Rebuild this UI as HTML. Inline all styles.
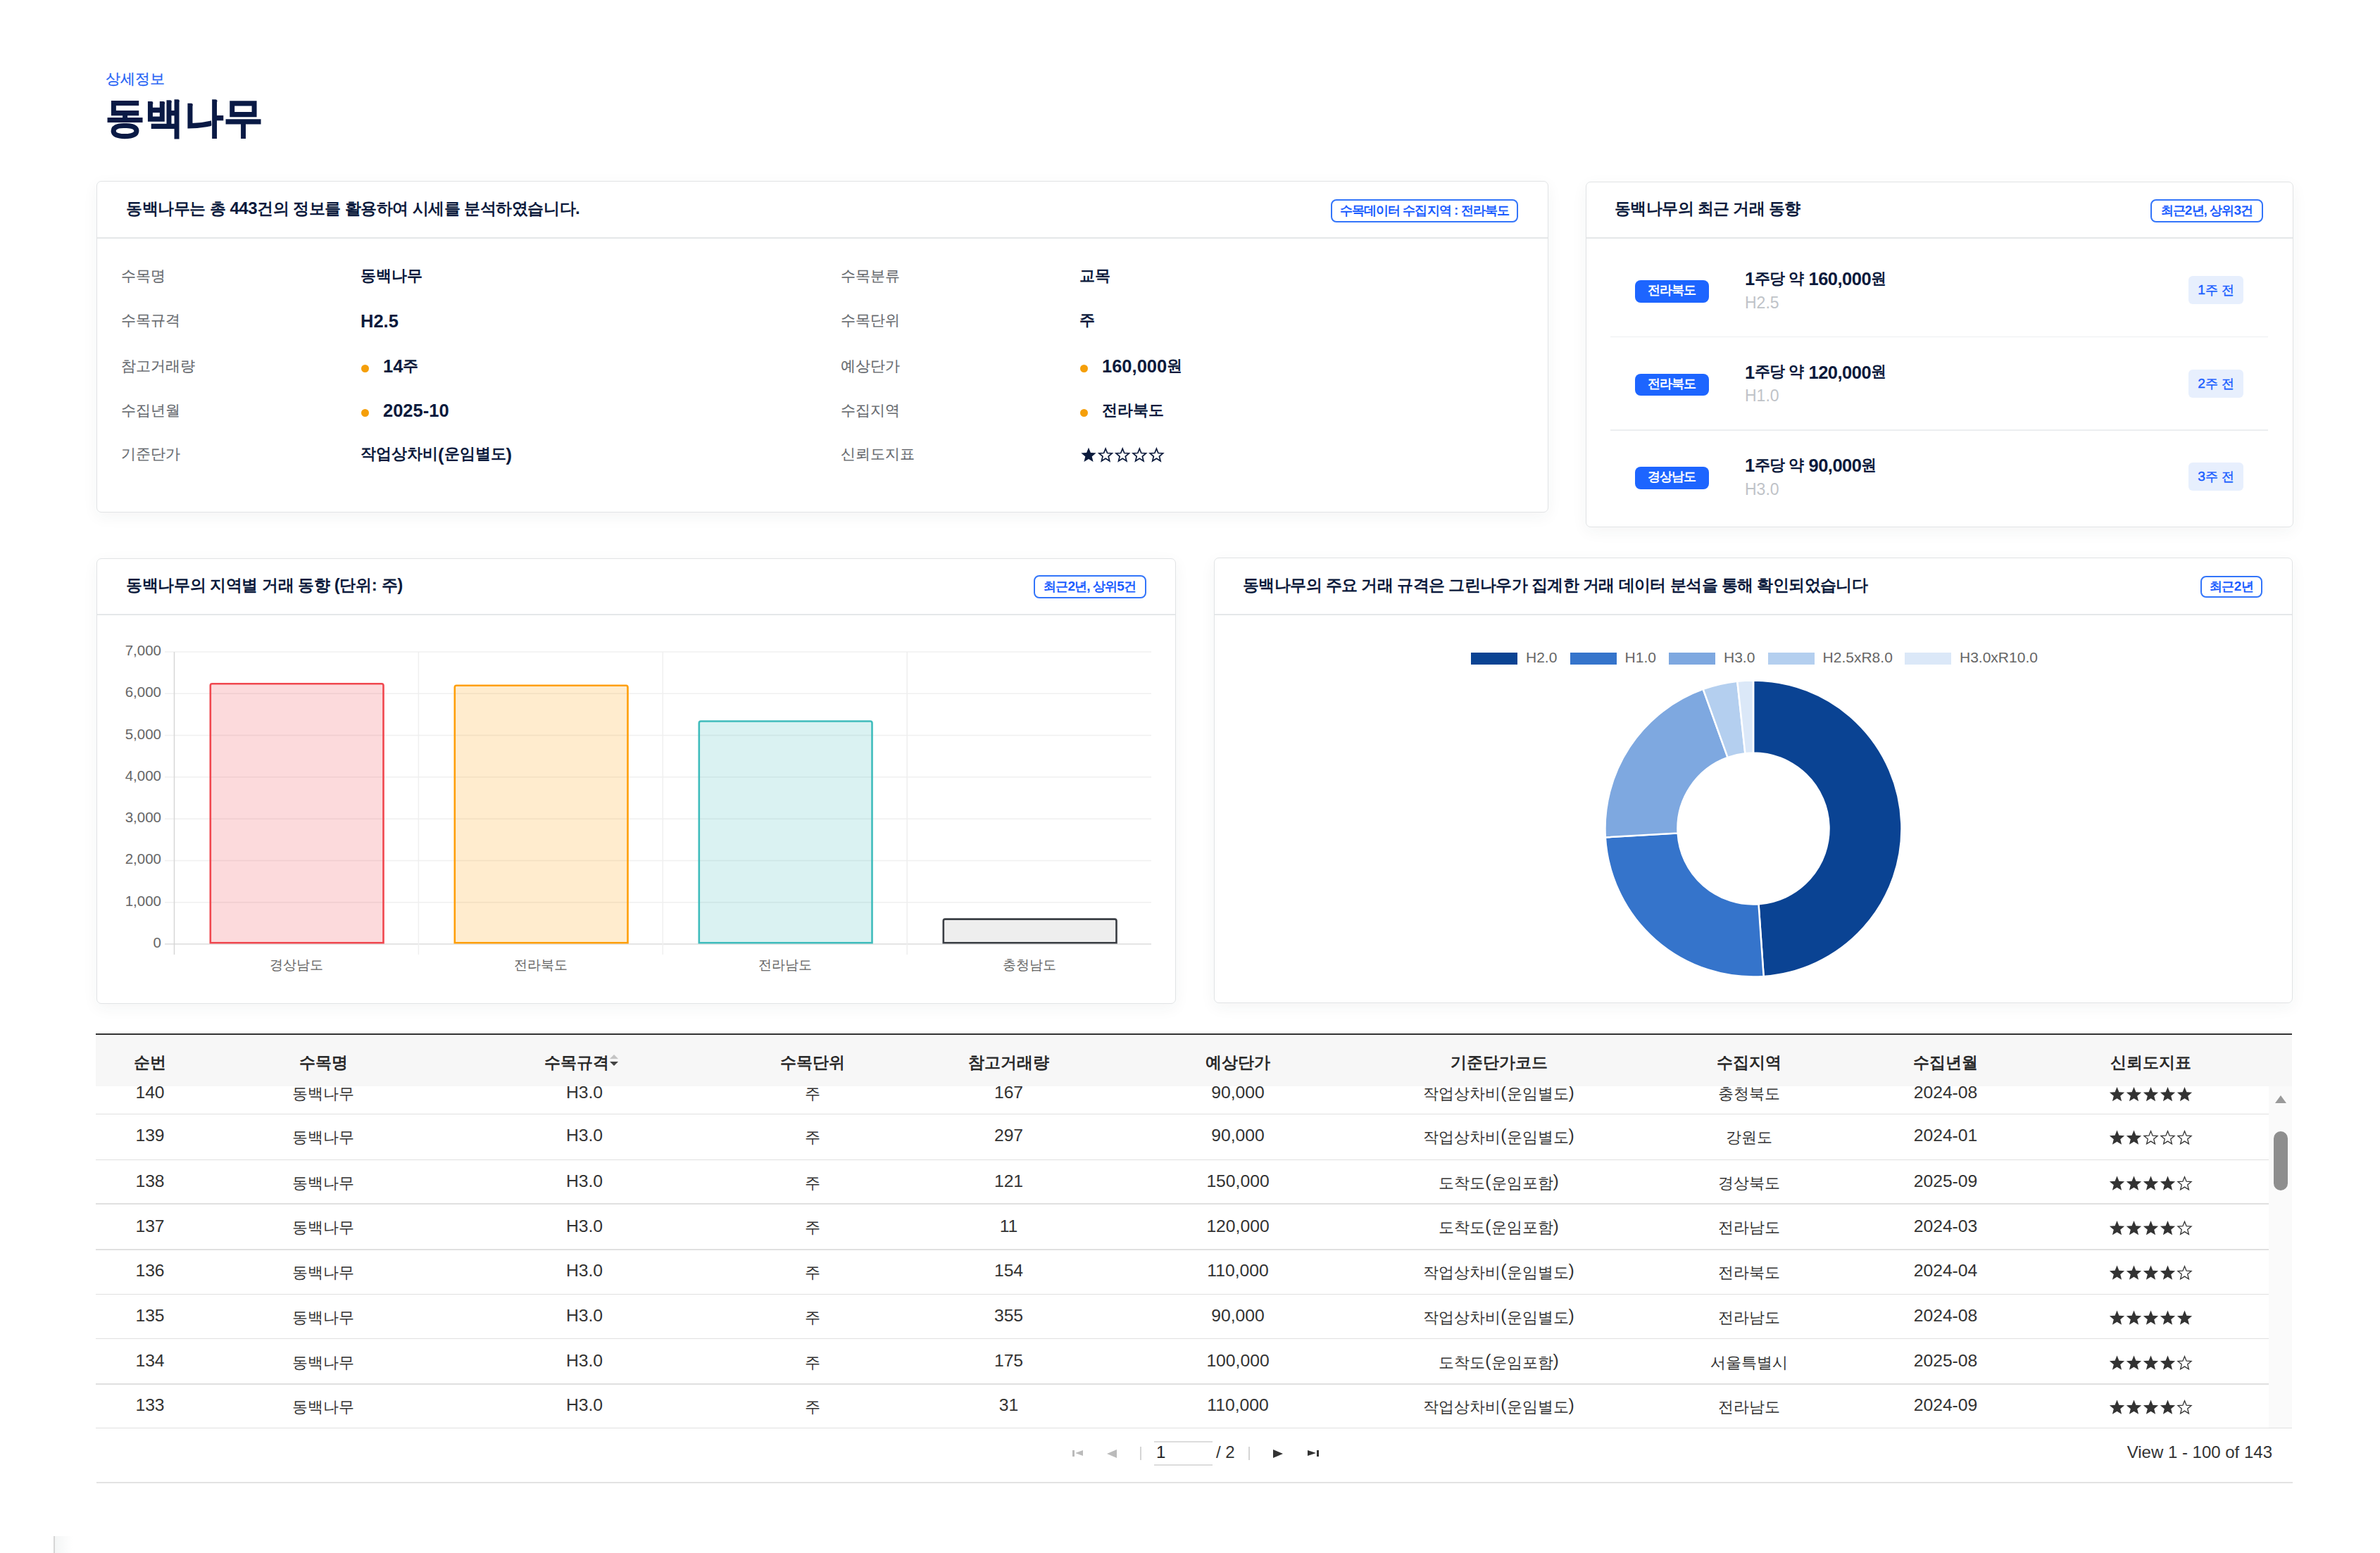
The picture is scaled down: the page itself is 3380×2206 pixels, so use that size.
<!DOCTYPE html><html><head><meta charset="utf-8"><style>
*{margin:0;padding:0;box-sizing:border-box}
html,body{width:3380px;height:2206px;overflow:hidden;background:#fff;font-family:"Liberation Sans",sans-serif;color:#0b1a3c}
.a{position:absolute}
.t{position:absolute;line-height:0;white-space:nowrap}
.c{transform:translateX(-50%)}
.r{transform:translateX(-100%)}
.card{position:absolute;background:#fff;border:1.5px solid #e1e3e5;border-radius:7px;box-shadow:0 6px 22px rgba(40,50,60,0.05)}
.hl{position:absolute;height:1.5px;background:#e5e7e9}
.badge{position:absolute;border:2px solid #3375fa;border-radius:8px;background:#fff}
.dot{position:absolute;width:11px;height:11px;border-radius:50%;background:#f59f0a}
.pill{position:absolute;background:#1d65ff;border-radius:8px}
.wk{position:absolute;background:#e7effd;border-radius:6px}
</style></head><body>
<div class="t" style="left:150px;top:111.5px;font-size:21.3px;color:#2563f5;-webkit-text-stroke:0.25px #2563f5">상세정보</div>
<div class="t" style="left:150px;top:167px;font-size:58.5px;color:#0a1a45;font-weight:700;letter-spacing:1.0px;-webkit-text-stroke:1.5px #0a1a45;transform:scaleX(0.935);transform-origin:0 0">동백나무</div>
<div class="card" style="left:137px;top:257px;width:2062px;height:471px"></div>
<div class="hl" style="left:138px;top:337.25px;width:2060px"></div>
<div class="t" style="left:179px;top:296.2px;font-size:24px;color:#0b1a3c;font-weight:700;letter-spacing:-0.44px"><span style="font-size:0.94em">동백나무는 총</span> 443<span style="font-size:0.94em">건의 정보를 활용하여 시세를 분석하였습니다</span>.</div>
<div class="badge" style="left:1890px;top:283px;width:266px;height:33px"></div>
<div class="t c" style="left:2023.0px;top:298.5px;font-size:19px;color:#1a5cff;font-weight:700;letter-spacing:-0.95px"><span style="font-size:0.95em">수목데이터 수집지역</span> : <span style="font-size:0.95em">전라북도</span></div>
<div class="t" style="left:172px;top:391.5px;font-size:20.6px;color:#66696e;-webkit-text-stroke:0.15px #66696e">수목명</div>
<div class="t" style="left:512px;top:392px;font-size:25.5px;color:#0b1a3c;font-weight:700"><span style="font-size:0.875em;position:relative;top:-2.5px">동백나무</span></div>
<div class="t" style="left:172px;top:455.0px;font-size:20.6px;color:#66696e;-webkit-text-stroke:0.15px #66696e">수목규격</div>
<div class="t" style="left:512px;top:455.5px;font-size:25.5px;color:#0b1a3c;font-weight:700">H2.5</div>
<div class="t" style="left:172px;top:519.5px;font-size:20.6px;color:#66696e;-webkit-text-stroke:0.15px #66696e">참고거래량</div>
<div class="dot" style="left:512.5px;top:518px"></div>
<div class="t" style="left:544px;top:520px;font-size:25.5px;color:#0b1a3c;font-weight:700">14<span style="font-size:0.875em;position:relative;top:-2.5px">주</span></div>
<div class="t" style="left:172px;top:582.5px;font-size:20.6px;color:#66696e;-webkit-text-stroke:0.15px #66696e">수집년월</div>
<div class="dot" style="left:512.5px;top:581px"></div>
<div class="t" style="left:544px;top:583px;font-size:25.5px;color:#0b1a3c;font-weight:700">2025-10</div>
<div class="t" style="left:172px;top:645.0px;font-size:20.6px;color:#66696e;-webkit-text-stroke:0.15px #66696e">기준단가</div>
<div class="t" style="left:512px;top:645.5px;font-size:25.5px;color:#0b1a3c;font-weight:700"><span style="font-size:0.875em;position:relative;top:-2.5px">작업상차비</span>(<span style="font-size:0.875em;position:relative;top:-2.5px">운임별도</span>)</div>
<div class="t" style="left:1194px;top:391.5px;font-size:20.6px;color:#66696e;-webkit-text-stroke:0.15px #66696e">수목분류</div>
<div class="t" style="left:1533px;top:392px;font-size:25.5px;color:#0b1a3c;font-weight:700"><span style="font-size:0.875em;position:relative;top:-2.5px">교목</span></div>
<div class="t" style="left:1194px;top:455.0px;font-size:20.6px;color:#66696e;-webkit-text-stroke:0.15px #66696e">수목단위</div>
<div class="t" style="left:1533px;top:455.5px;font-size:25.5px;color:#0b1a3c;font-weight:700"><span style="font-size:0.875em;position:relative;top:-2.5px">주</span></div>
<div class="t" style="left:1194px;top:519.5px;font-size:20.6px;color:#66696e;-webkit-text-stroke:0.15px #66696e">예상단가</div>
<div class="dot" style="left:1533.5px;top:518px"></div>
<div class="t" style="left:1565px;top:520px;font-size:25.5px;color:#0b1a3c;font-weight:700">160,000<span style="font-size:0.875em;position:relative;top:-2.5px">원</span></div>
<div class="t" style="left:1194px;top:582.5px;font-size:20.6px;color:#66696e;-webkit-text-stroke:0.15px #66696e">수집지역</div>
<div class="dot" style="left:1533.5px;top:581px"></div>
<div class="t" style="left:1565px;top:583px;font-size:25.5px;color:#0b1a3c;font-weight:700"><span style="font-size:0.875em;position:relative;top:-2.5px">전라북도</span></div>
<div class="t" style="left:1194px;top:645.0px;font-size:20.6px;color:#66696e;-webkit-text-stroke:0.15px #66696e">신뢰도지표</div>
<div class="card" style="left:2252px;top:258px;width:1005px;height:491px"></div>
<div class="hl" style="left:2253px;top:337.25px;width:1003px"></div>
<div class="t" style="left:2293px;top:296.4px;font-size:24px;color:#0b1a3c;font-weight:700;letter-spacing:-0.6px"><span style="font-size:0.94em">동백나무의 최근 거래 동향</span></div>
<div class="badge" style="left:3054px;top:283px;width:160px;height:33px"></div>
<div class="t c" style="left:3134.0px;top:298.5px;font-size:19px;color:#1a5cff;font-weight:700;letter-spacing:-0.9px"><span style="font-size:0.95em">최근</span>2<span style="font-size:0.95em">년</span>, <span style="font-size:0.95em">상위</span>3<span style="font-size:0.95em">건</span></div>
<div class="pill" style="left:2321.5px;top:398.0px;width:105px;height:31.5px"></div>
<div class="t c" style="left:2374px;top:412.0px;font-size:19px;color:#fff;font-weight:700;letter-spacing:-1.2px"><span style="font-size:0.95em">전라북도</span></div>
<div class="t" style="left:2478px;top:396.0px;font-size:25.5px;color:#0b1a3c;font-weight:700;letter-spacing:-0.5px">1<span style="font-size:0.875em;position:relative;top:-2.5px">주당 약</span> 160,000<span style="font-size:0.875em;position:relative;top:-2.5px">원</span></div>
<div class="t" style="left:2478px;top:429.5px;font-size:23px;color:#bfc3c8">H2.5</div>
<div class="wk" style="left:3108px;top:392.0px;width:78px;height:40px"></div>
<div class="t c" style="left:3147px;top:412.0px;font-size:19.2px;color:#1a5eff;-webkit-text-stroke:0.45px #1a5eff">1<span style="font-size:0.95em">주 전</span></div>
<div class="hl" style="left:2287px;top:477.5px;width:934px;background:#eceef0"></div>
<div class="pill" style="left:2321.5px;top:530.5px;width:105px;height:31.5px"></div>
<div class="t c" style="left:2374px;top:544.5px;font-size:19px;color:#fff;font-weight:700;letter-spacing:-1.2px"><span style="font-size:0.95em">전라북도</span></div>
<div class="t" style="left:2478px;top:528.5px;font-size:25.5px;color:#0b1a3c;font-weight:700;letter-spacing:-0.5px">1<span style="font-size:0.875em;position:relative;top:-2.5px">주당 약</span> 120,000<span style="font-size:0.875em;position:relative;top:-2.5px">원</span></div>
<div class="t" style="left:2478px;top:562.0px;font-size:23px;color:#bfc3c8">H1.0</div>
<div class="wk" style="left:3108px;top:524.5px;width:78px;height:40px"></div>
<div class="t c" style="left:3147px;top:544.5px;font-size:19.2px;color:#1a5eff;-webkit-text-stroke:0.45px #1a5eff">2<span style="font-size:0.95em">주 전</span></div>
<div class="hl" style="left:2287px;top:610.0px;width:934px;background:#eceef0"></div>
<div class="pill" style="left:2321.5px;top:663.0px;width:105px;height:31.5px"></div>
<div class="t c" style="left:2374px;top:677.0px;font-size:19px;color:#fff;font-weight:700;letter-spacing:-1.2px"><span style="font-size:0.95em">경상남도</span></div>
<div class="t" style="left:2478px;top:661.0px;font-size:25.5px;color:#0b1a3c;font-weight:700;letter-spacing:-0.5px">1<span style="font-size:0.875em;position:relative;top:-2.5px">주당 약</span> 90,000<span style="font-size:0.875em;position:relative;top:-2.5px">원</span></div>
<div class="t" style="left:2478px;top:694.5px;font-size:23px;color:#bfc3c8">H3.0</div>
<div class="wk" style="left:3108px;top:657.0px;width:78px;height:40px"></div>
<div class="t c" style="left:3147px;top:677.0px;font-size:19.2px;color:#1a5eff;-webkit-text-stroke:0.45px #1a5eff">3<span style="font-size:0.95em">주 전</span></div>
<div class="card" style="left:137px;top:793px;width:1533px;height:633px"></div>
<div class="hl" style="left:138px;top:872.25px;width:1531px"></div>
<div class="t" style="left:179px;top:830.5px;font-size:24px;color:#0b1a3c;font-weight:700;letter-spacing:-0.36px"><span style="font-size:0.94em">동백나무의 지역별 거래 동향</span> (<span style="font-size:0.94em">단위</span>: <span style="font-size:0.94em">주</span>)</div>
<div class="badge" style="left:1468px;top:817px;width:159.5px;height:33px"></div>
<div class="t c" style="left:1547.75px;top:832.5px;font-size:19px;color:#1a5cff;font-weight:700;letter-spacing:-0.9px"><span style="font-size:0.95em">최근</span>2<span style="font-size:0.95em">년</span>, <span style="font-size:0.95em">상위</span>5<span style="font-size:0.95em">건</span></div>
<svg class="a" style="left:0;top:0" width="3380" height="1500"><line x1="234" y1="1341.0" x2="1635" y2="1341.0" stroke="#dcdcdc" stroke-width="1.5"/><line x1="234" y1="1281.7142857142858" x2="1635" y2="1281.7142857142858" stroke="#f0f0f0" stroke-width="1.5"/><line x1="234" y1="1222.4285714285713" x2="1635" y2="1222.4285714285713" stroke="#f0f0f0" stroke-width="1.5"/><line x1="234" y1="1163.142857142857" x2="1635" y2="1163.142857142857" stroke="#f0f0f0" stroke-width="1.5"/><line x1="234" y1="1103.857142857143" x2="1635" y2="1103.857142857143" stroke="#f0f0f0" stroke-width="1.5"/><line x1="234" y1="1044.5714285714284" x2="1635" y2="1044.5714285714284" stroke="#f0f0f0" stroke-width="1.5"/><line x1="234" y1="985.2857142857142" x2="1635" y2="985.2857142857142" stroke="#f0f0f0" stroke-width="1.5"/><line x1="234" y1="926.0" x2="1635" y2="926.0" stroke="#f0f0f0" stroke-width="1.5"/><line x1="247.5" y1="926" x2="247.5" y2="1356" stroke="#d6d6d6" stroke-width="1.5"/><line x1="594.4" y1="926" x2="594.4" y2="1356" stroke="#efefef" stroke-width="1.5"/><line x1="941.3" y1="926" x2="941.3" y2="1356" stroke="#efefef" stroke-width="1.5"/><line x1="1288.1999999999998" y1="926" x2="1288.1999999999998" y2="1356" stroke="#efefef" stroke-width="1.5"/><path d="M298.80,1339.30 L298.80,973.80 Q298.80,971.30 301.30,971.30 L542.00,971.30 Q544.50,971.30 544.50,973.80 L544.50,1339.30 Z" fill="rgba(240,70,80,0.2)" stroke="#f0474f" stroke-width="2.6"/><path d="M645.80,1339.30 L645.80,976.30 Q645.80,973.80 648.30,973.80 L889.00,973.80 Q891.50,973.80 891.50,976.30 L891.50,1339.30 Z" fill="rgba(255,160,10,0.2)" stroke="#ff9f0a" stroke-width="2.6"/><path d="M992.80,1339.30 L992.80,1027.00 Q992.80,1024.50 995.30,1024.50 L1236.00,1024.50 Q1238.50,1024.50 1238.50,1027.00 L1238.50,1339.30 Z" fill="rgba(70,190,190,0.2)" stroke="#3fbcbc" stroke-width="2.6"/><path d="M1339.80,1339.30 L1339.80,1308.10 Q1339.80,1305.60 1342.30,1305.60 L1583.00,1305.60 Q1585.50,1305.60 1585.50,1308.10 L1585.50,1339.30 Z" fill="#eeeeee" stroke="#3a3e44" stroke-width="2.6"/></svg>
<div class="t r" style="left:229px;top:1339.0px;font-size:20.5px;color:#666">0</div>
<div class="t r" style="left:229px;top:1279.7142857142858px;font-size:20.5px;color:#666">1,000</div>
<div class="t r" style="left:229px;top:1220.4285714285713px;font-size:20.5px;color:#666">2,000</div>
<div class="t r" style="left:229px;top:1161.142857142857px;font-size:20.5px;color:#666">3,000</div>
<div class="t r" style="left:229px;top:1101.857142857143px;font-size:20.5px;color:#666">4,000</div>
<div class="t r" style="left:229px;top:1042.5714285714284px;font-size:20.5px;color:#666">5,000</div>
<div class="t r" style="left:229px;top:983.2857142857142px;font-size:20.5px;color:#666">6,000</div>
<div class="t r" style="left:229px;top:924.0px;font-size:20.5px;color:#666">7,000</div>
<div class="t c" style="left:421.45px;top:1371px;font-size:19.2px;color:#666">경상남도</div>
<div class="t c" style="left:768.3499999999999px;top:1371px;font-size:19.2px;color:#666">전라북도</div>
<div class="t c" style="left:1115.25px;top:1371px;font-size:19.2px;color:#666">전라남도</div>
<div class="t c" style="left:1462.1499999999999px;top:1371px;font-size:19.2px;color:#666">충청남도</div>
<div class="card" style="left:1723.5px;top:792px;width:1532.5px;height:633px"></div>
<div class="hl" style="left:1724.5px;top:872.25px;width:1530.5px"></div>
<div class="t" style="left:1765px;top:831px;font-size:24px;color:#0b1a3c;font-weight:700;letter-spacing:-0.56px"><span style="font-size:0.94em">동백나무의 주요 거래 규격은 그린나우가 집계한 거래 데이터 분석을 통해 확인되었습니다</span></div>
<div class="badge" style="left:3125px;top:818px;width:88px;height:31px"></div>
<div class="t c" style="left:3169.0px;top:832.5px;font-size:19px;color:#1a5cff;font-weight:700;letter-spacing:-0.6px"><span style="font-size:0.95em">최근</span>2<span style="font-size:0.95em">년</span></div>
<div class="a" style="left:2089px;top:927px;width:66px;height:17px;background:#0a4393"></div>
<div class="t" style="left:2167px;top:933.5px;font-size:21px;color:#666">H2.0</div>
<div class="a" style="left:2229.6px;top:927px;width:66px;height:17px;background:#3574cb"></div>
<div class="t" style="left:2307.6px;top:933.5px;font-size:21px;color:#666">H1.0</div>
<div class="a" style="left:2370px;top:927px;width:66px;height:17px;background:#7ea8e0"></div>
<div class="t" style="left:2448px;top:933.5px;font-size:21px;color:#666">H3.0</div>
<div class="a" style="left:2510.6px;top:927px;width:66px;height:17px;background:#b4cfef"></div>
<div class="t" style="left:2588.6px;top:933.5px;font-size:21px;color:#666">H2.5xR8.0</div>
<div class="a" style="left:2705px;top:927px;width:66px;height:17px;background:#dbe8f8"></div>
<div class="t" style="left:2783px;top:933.5px;font-size:21px;color:#666">H3.0xR10.0</div>
<svg class="a" style="left:0;top:0" width="3380" height="1500"><path d="M2490.00,966.50 A210.5,210.5 0 0 1 2504.68,1386.99 L2497.50,1284.24 A107.5,107.5 0 0 0 2490.00,1069.50 Z" fill="#0a4393" stroke="#fff" stroke-width="2.5"/><path d="M2504.68,1386.99 A210.5,210.5 0 0 1 2279.87,1189.48 L2382.69,1183.38 A107.5,107.5 0 0 0 2497.50,1284.24 Z" fill="#3574cb" stroke="#fff" stroke-width="2.5"/><path d="M2279.87,1189.48 A210.5,210.5 0 0 1 2418.70,978.94 L2453.59,1075.86 A107.5,107.5 0 0 0 2382.69,1183.38 Z" fill="#7ea8e0" stroke="#fff" stroke-width="2.5"/><path d="M2418.70,978.94 A210.5,210.5 0 0 1 2467.27,967.73 L2478.39,1070.13 A107.5,107.5 0 0 0 2453.59,1075.86 Z" fill="#b4cfef" stroke="#fff" stroke-width="2.5"/><path d="M2467.27,967.73 A210.5,210.5 0 0 1 2490.00,966.50 L2490.00,1069.50 A107.5,107.5 0 0 0 2478.39,1070.13 Z" fill="#dbe8f8" stroke="#fff" stroke-width="2.5"/></svg>
<div class="a" style="left:136px;top:1467.5px;width:3119px;height:2px;background:#333"></div>
<div class="a" style="left:136px;top:1469.5px;width:3119px;height:73.5px;background:#f7f7f7"></div>
<div class="a" style="left:136px;top:1543px;width:3119px;height:486px;overflow:hidden">
<div class="a" style="left:3086px;top:0;width:33px;height:486px;background:#fafafa"></div>
<div class="t c" style="left:77px;top:8.5px;font-size:24.7px;color:#333">140</div>
<div class="t c" style="left:323px;top:8.5px;font-size:24.7px;color:#333"><span style="font-size:0.88em;position:relative;top:1.5px">동백나무</span></div>
<div class="t c" style="left:694px;top:8.5px;font-size:24.7px;color:#333">H3.0</div>
<div class="t c" style="left:1018px;top:8.5px;font-size:24.7px;color:#333"><span style="font-size:0.88em;position:relative;top:1.5px">주</span></div>
<div class="t c" style="left:1296.5px;top:8.5px;font-size:24.7px;color:#333">167</div>
<div class="t c" style="left:1622px;top:8.5px;font-size:24.7px;color:#333">90,000</div>
<div class="t c" style="left:1992.5px;top:8.5px;font-size:24.7px;color:#333"><span style="font-size:0.88em;position:relative;top:1.5px">작업상차비</span>(<span style="font-size:0.88em;position:relative;top:1.5px">운임별도</span>)</div>
<div class="t c" style="left:2348px;top:8.5px;font-size:24.7px;color:#333"><span style="font-size:0.88em;position:relative;top:1.5px">충청북도</span></div>
<div class="t c" style="left:2627px;top:8.5px;font-size:24.7px;color:#333">2024-08</div>
<div class="a" style="left:0;top:38.75px;width:3086px;height:1.5px;background:#e0e0e0"></div>
<div class="t c" style="left:77px;top:70px;font-size:24.7px;color:#333">139</div>
<div class="t c" style="left:323px;top:70px;font-size:24.7px;color:#333"><span style="font-size:0.88em;position:relative;top:1.5px">동백나무</span></div>
<div class="t c" style="left:694px;top:70px;font-size:24.7px;color:#333">H3.0</div>
<div class="t c" style="left:1018px;top:70px;font-size:24.7px;color:#333"><span style="font-size:0.88em;position:relative;top:1.5px">주</span></div>
<div class="t c" style="left:1296.5px;top:70px;font-size:24.7px;color:#333">297</div>
<div class="t c" style="left:1622px;top:70px;font-size:24.7px;color:#333">90,000</div>
<div class="t c" style="left:1992.5px;top:70px;font-size:24.7px;color:#333"><span style="font-size:0.88em;position:relative;top:1.5px">작업상차비</span>(<span style="font-size:0.88em;position:relative;top:1.5px">운임별도</span>)</div>
<div class="t c" style="left:2348px;top:70px;font-size:24.7px;color:#333"><span style="font-size:0.88em;position:relative;top:1.5px">강원도</span></div>
<div class="t c" style="left:2627px;top:70px;font-size:24.7px;color:#333">2024-01</div>
<div class="a" style="left:0;top:103.75px;width:3086px;height:1.5px;background:#e0e0e0"></div>
<div class="t c" style="left:77px;top:135px;font-size:24.7px;color:#333">138</div>
<div class="t c" style="left:323px;top:135px;font-size:24.7px;color:#333"><span style="font-size:0.88em;position:relative;top:1.5px">동백나무</span></div>
<div class="t c" style="left:694px;top:135px;font-size:24.7px;color:#333">H3.0</div>
<div class="t c" style="left:1018px;top:135px;font-size:24.7px;color:#333"><span style="font-size:0.88em;position:relative;top:1.5px">주</span></div>
<div class="t c" style="left:1296.5px;top:135px;font-size:24.7px;color:#333">121</div>
<div class="t c" style="left:1622px;top:135px;font-size:24.7px;color:#333">150,000</div>
<div class="t c" style="left:1992.5px;top:135px;font-size:24.7px;color:#333"><span style="font-size:0.88em;position:relative;top:1.5px">도착도</span>(<span style="font-size:0.88em;position:relative;top:1.5px">운임포함</span>)</div>
<div class="t c" style="left:2348px;top:135px;font-size:24.7px;color:#333"><span style="font-size:0.88em;position:relative;top:1.5px">경상북도</span></div>
<div class="t c" style="left:2627px;top:135px;font-size:24.7px;color:#333">2025-09</div>
<div class="a" style="left:0;top:166.25px;width:3086px;height:1.5px;background:#e0e0e0"></div>
<div class="t c" style="left:77px;top:198.5px;font-size:24.7px;color:#333">137</div>
<div class="t c" style="left:323px;top:198.5px;font-size:24.7px;color:#333"><span style="font-size:0.88em;position:relative;top:1.5px">동백나무</span></div>
<div class="t c" style="left:694px;top:198.5px;font-size:24.7px;color:#333">H3.0</div>
<div class="t c" style="left:1018px;top:198.5px;font-size:24.7px;color:#333"><span style="font-size:0.88em;position:relative;top:1.5px">주</span></div>
<div class="t c" style="left:1296.5px;top:198.5px;font-size:24.7px;color:#333">11</div>
<div class="t c" style="left:1622px;top:198.5px;font-size:24.7px;color:#333">120,000</div>
<div class="t c" style="left:1992.5px;top:198.5px;font-size:24.7px;color:#333"><span style="font-size:0.88em;position:relative;top:1.5px">도착도</span>(<span style="font-size:0.88em;position:relative;top:1.5px">운임포함</span>)</div>
<div class="t c" style="left:2348px;top:198.5px;font-size:24.7px;color:#333"><span style="font-size:0.88em;position:relative;top:1.5px">전라남도</span></div>
<div class="t c" style="left:2627px;top:198.5px;font-size:24.7px;color:#333">2024-03</div>
<div class="a" style="left:0;top:231.25px;width:3086px;height:1.5px;background:#e0e0e0"></div>
<div class="t c" style="left:77px;top:262px;font-size:24.7px;color:#333">136</div>
<div class="t c" style="left:323px;top:262px;font-size:24.7px;color:#333"><span style="font-size:0.88em;position:relative;top:1.5px">동백나무</span></div>
<div class="t c" style="left:694px;top:262px;font-size:24.7px;color:#333">H3.0</div>
<div class="t c" style="left:1018px;top:262px;font-size:24.7px;color:#333"><span style="font-size:0.88em;position:relative;top:1.5px">주</span></div>
<div class="t c" style="left:1296.5px;top:262px;font-size:24.7px;color:#333">154</div>
<div class="t c" style="left:1622px;top:262px;font-size:24.7px;color:#333">110,000</div>
<div class="t c" style="left:1992.5px;top:262px;font-size:24.7px;color:#333"><span style="font-size:0.88em;position:relative;top:1.5px">작업상차비</span>(<span style="font-size:0.88em;position:relative;top:1.5px">운임별도</span>)</div>
<div class="t c" style="left:2348px;top:262px;font-size:24.7px;color:#333"><span style="font-size:0.88em;position:relative;top:1.5px">전라북도</span></div>
<div class="t c" style="left:2627px;top:262px;font-size:24.7px;color:#333">2024-04</div>
<div class="a" style="left:0;top:294.75px;width:3086px;height:1.5px;background:#e0e0e0"></div>
<div class="t c" style="left:77px;top:326px;font-size:24.7px;color:#333">135</div>
<div class="t c" style="left:323px;top:326px;font-size:24.7px;color:#333"><span style="font-size:0.88em;position:relative;top:1.5px">동백나무</span></div>
<div class="t c" style="left:694px;top:326px;font-size:24.7px;color:#333">H3.0</div>
<div class="t c" style="left:1018px;top:326px;font-size:24.7px;color:#333"><span style="font-size:0.88em;position:relative;top:1.5px">주</span></div>
<div class="t c" style="left:1296.5px;top:326px;font-size:24.7px;color:#333">355</div>
<div class="t c" style="left:1622px;top:326px;font-size:24.7px;color:#333">90,000</div>
<div class="t c" style="left:1992.5px;top:326px;font-size:24.7px;color:#333"><span style="font-size:0.88em;position:relative;top:1.5px">작업상차비</span>(<span style="font-size:0.88em;position:relative;top:1.5px">운임별도</span>)</div>
<div class="t c" style="left:2348px;top:326px;font-size:24.7px;color:#333"><span style="font-size:0.88em;position:relative;top:1.5px">전라남도</span></div>
<div class="t c" style="left:2627px;top:326px;font-size:24.7px;color:#333">2024-08</div>
<div class="a" style="left:0;top:357.75px;width:3086px;height:1.5px;background:#e0e0e0"></div>
<div class="t c" style="left:77px;top:390px;font-size:24.7px;color:#333">134</div>
<div class="t c" style="left:323px;top:390px;font-size:24.7px;color:#333"><span style="font-size:0.88em;position:relative;top:1.5px">동백나무</span></div>
<div class="t c" style="left:694px;top:390px;font-size:24.7px;color:#333">H3.0</div>
<div class="t c" style="left:1018px;top:390px;font-size:24.7px;color:#333"><span style="font-size:0.88em;position:relative;top:1.5px">주</span></div>
<div class="t c" style="left:1296.5px;top:390px;font-size:24.7px;color:#333">175</div>
<div class="t c" style="left:1622px;top:390px;font-size:24.7px;color:#333">100,000</div>
<div class="t c" style="left:1992.5px;top:390px;font-size:24.7px;color:#333"><span style="font-size:0.88em;position:relative;top:1.5px">도착도</span>(<span style="font-size:0.88em;position:relative;top:1.5px">운임포함</span>)</div>
<div class="t c" style="left:2348px;top:390px;font-size:24.7px;color:#333"><span style="font-size:0.88em;position:relative;top:1.5px">서울특별시</span></div>
<div class="t c" style="left:2627px;top:390px;font-size:24.7px;color:#333">2025-08</div>
<div class="a" style="left:0;top:422.25px;width:3086px;height:1.5px;background:#e0e0e0"></div>
<div class="t c" style="left:77px;top:453px;font-size:24.7px;color:#333">133</div>
<div class="t c" style="left:323px;top:453px;font-size:24.7px;color:#333"><span style="font-size:0.88em;position:relative;top:1.5px">동백나무</span></div>
<div class="t c" style="left:694px;top:453px;font-size:24.7px;color:#333">H3.0</div>
<div class="t c" style="left:1018px;top:453px;font-size:24.7px;color:#333"><span style="font-size:0.88em;position:relative;top:1.5px">주</span></div>
<div class="t c" style="left:1296.5px;top:453px;font-size:24.7px;color:#333">31</div>
<div class="t c" style="left:1622px;top:453px;font-size:24.7px;color:#333">110,000</div>
<div class="t c" style="left:1992.5px;top:453px;font-size:24.7px;color:#333"><span style="font-size:0.88em;position:relative;top:1.5px">작업상차비</span>(<span style="font-size:0.88em;position:relative;top:1.5px">운임별도</span>)</div>
<div class="t c" style="left:2348px;top:453px;font-size:24.7px;color:#333"><span style="font-size:0.88em;position:relative;top:1.5px">전라남도</span></div>
<div class="t c" style="left:2627px;top:453px;font-size:24.7px;color:#333">2024-09</div>
<div class="a" style="left:0;top:484.75px;width:3119px;height:1.5px;background:#e0e0e0"></div>
<svg class="a" style="left:0;top:0" width="3119" height="486"><polygon points="2870.50,1.00 2873.40,8.21 2881.15,8.74 2875.19,13.72 2877.08,21.26 2870.50,17.13 2863.92,21.26 2865.81,13.72 2859.85,8.74 2867.60,8.21" fill="#333"/><polygon points="2894.50,1.00 2897.40,8.21 2905.15,8.74 2899.19,13.72 2901.08,21.26 2894.50,17.13 2887.92,21.26 2889.81,13.72 2883.85,8.74 2891.60,8.21" fill="#333"/><polygon points="2918.50,1.00 2921.40,8.21 2929.15,8.74 2923.19,13.72 2925.08,21.26 2918.50,17.13 2911.92,21.26 2913.81,13.72 2907.85,8.74 2915.60,8.21" fill="#333"/><polygon points="2942.50,1.00 2945.40,8.21 2953.15,8.74 2947.19,13.72 2949.08,21.26 2942.50,17.13 2935.92,21.26 2937.81,13.72 2931.85,8.74 2939.60,8.21" fill="#333"/><polygon points="2966.50,1.00 2969.40,8.21 2977.15,8.74 2971.19,13.72 2973.08,21.26 2966.50,17.13 2959.92,21.26 2961.81,13.72 2955.85,8.74 2963.60,8.21" fill="#333"/><polygon points="2870.50,62.50 2873.40,69.71 2881.15,70.24 2875.19,75.22 2877.08,82.76 2870.50,78.63 2863.92,82.76 2865.81,75.22 2859.85,70.24 2867.60,69.71" fill="#333"/><polygon points="2894.50,62.50 2897.40,69.71 2905.15,70.24 2899.19,75.22 2901.08,82.76 2894.50,78.63 2887.92,82.76 2889.81,75.22 2883.85,70.24 2891.60,69.71" fill="#333"/><polygon points="2918.50,63.67 2921.09,70.13 2928.04,70.60 2922.70,75.06 2924.40,81.81 2918.50,78.11 2912.60,81.81 2914.30,75.06 2908.96,70.60 2915.91,70.13" fill="none" stroke="#333" stroke-width="1.3" stroke-linejoin="miter"/><polygon points="2942.50,63.67 2945.09,70.13 2952.04,70.60 2946.70,75.06 2948.40,81.81 2942.50,78.11 2936.60,81.81 2938.30,75.06 2932.96,70.60 2939.91,70.13" fill="none" stroke="#333" stroke-width="1.3" stroke-linejoin="miter"/><polygon points="2966.50,63.67 2969.09,70.13 2976.04,70.60 2970.70,75.06 2972.40,81.81 2966.50,78.11 2960.60,81.81 2962.30,75.06 2956.96,70.60 2963.91,70.13" fill="none" stroke="#333" stroke-width="1.3" stroke-linejoin="miter"/><polygon points="2870.50,127.50 2873.40,134.71 2881.15,135.24 2875.19,140.22 2877.08,147.76 2870.50,143.63 2863.92,147.76 2865.81,140.22 2859.85,135.24 2867.60,134.71" fill="#333"/><polygon points="2894.50,127.50 2897.40,134.71 2905.15,135.24 2899.19,140.22 2901.08,147.76 2894.50,143.63 2887.92,147.76 2889.81,140.22 2883.85,135.24 2891.60,134.71" fill="#333"/><polygon points="2918.50,127.50 2921.40,134.71 2929.15,135.24 2923.19,140.22 2925.08,147.76 2918.50,143.63 2911.92,147.76 2913.81,140.22 2907.85,135.24 2915.60,134.71" fill="#333"/><polygon points="2942.50,127.50 2945.40,134.71 2953.15,135.24 2947.19,140.22 2949.08,147.76 2942.50,143.63 2935.92,147.76 2937.81,140.22 2931.85,135.24 2939.60,134.71" fill="#333"/><polygon points="2966.50,128.67 2969.09,135.13 2976.04,135.60 2970.70,140.06 2972.40,146.81 2966.50,143.11 2960.60,146.81 2962.30,140.06 2956.96,135.60 2963.91,135.13" fill="none" stroke="#333" stroke-width="1.3" stroke-linejoin="miter"/><polygon points="2870.50,191.00 2873.40,198.21 2881.15,198.74 2875.19,203.72 2877.08,211.26 2870.50,207.13 2863.92,211.26 2865.81,203.72 2859.85,198.74 2867.60,198.21" fill="#333"/><polygon points="2894.50,191.00 2897.40,198.21 2905.15,198.74 2899.19,203.72 2901.08,211.26 2894.50,207.13 2887.92,211.26 2889.81,203.72 2883.85,198.74 2891.60,198.21" fill="#333"/><polygon points="2918.50,191.00 2921.40,198.21 2929.15,198.74 2923.19,203.72 2925.08,211.26 2918.50,207.13 2911.92,211.26 2913.81,203.72 2907.85,198.74 2915.60,198.21" fill="#333"/><polygon points="2942.50,191.00 2945.40,198.21 2953.15,198.74 2947.19,203.72 2949.08,211.26 2942.50,207.13 2935.92,211.26 2937.81,203.72 2931.85,198.74 2939.60,198.21" fill="#333"/><polygon points="2966.50,192.17 2969.09,198.63 2976.04,199.10 2970.70,203.56 2972.40,210.31 2966.50,206.61 2960.60,210.31 2962.30,203.56 2956.96,199.10 2963.91,198.63" fill="none" stroke="#333" stroke-width="1.3" stroke-linejoin="miter"/><polygon points="2870.50,254.50 2873.40,261.71 2881.15,262.24 2875.19,267.22 2877.08,274.76 2870.50,270.63 2863.92,274.76 2865.81,267.22 2859.85,262.24 2867.60,261.71" fill="#333"/><polygon points="2894.50,254.50 2897.40,261.71 2905.15,262.24 2899.19,267.22 2901.08,274.76 2894.50,270.63 2887.92,274.76 2889.81,267.22 2883.85,262.24 2891.60,261.71" fill="#333"/><polygon points="2918.50,254.50 2921.40,261.71 2929.15,262.24 2923.19,267.22 2925.08,274.76 2918.50,270.63 2911.92,274.76 2913.81,267.22 2907.85,262.24 2915.60,261.71" fill="#333"/><polygon points="2942.50,254.50 2945.40,261.71 2953.15,262.24 2947.19,267.22 2949.08,274.76 2942.50,270.63 2935.92,274.76 2937.81,267.22 2931.85,262.24 2939.60,261.71" fill="#333"/><polygon points="2966.50,255.67 2969.09,262.13 2976.04,262.60 2970.70,267.06 2972.40,273.81 2966.50,270.11 2960.60,273.81 2962.30,267.06 2956.96,262.60 2963.91,262.13" fill="none" stroke="#333" stroke-width="1.3" stroke-linejoin="miter"/><polygon points="2870.50,318.50 2873.40,325.71 2881.15,326.24 2875.19,331.22 2877.08,338.76 2870.50,334.63 2863.92,338.76 2865.81,331.22 2859.85,326.24 2867.60,325.71" fill="#333"/><polygon points="2894.50,318.50 2897.40,325.71 2905.15,326.24 2899.19,331.22 2901.08,338.76 2894.50,334.63 2887.92,338.76 2889.81,331.22 2883.85,326.24 2891.60,325.71" fill="#333"/><polygon points="2918.50,318.50 2921.40,325.71 2929.15,326.24 2923.19,331.22 2925.08,338.76 2918.50,334.63 2911.92,338.76 2913.81,331.22 2907.85,326.24 2915.60,325.71" fill="#333"/><polygon points="2942.50,318.50 2945.40,325.71 2953.15,326.24 2947.19,331.22 2949.08,338.76 2942.50,334.63 2935.92,338.76 2937.81,331.22 2931.85,326.24 2939.60,325.71" fill="#333"/><polygon points="2966.50,318.50 2969.40,325.71 2977.15,326.24 2971.19,331.22 2973.08,338.76 2966.50,334.63 2959.92,338.76 2961.81,331.22 2955.85,326.24 2963.60,325.71" fill="#333"/><polygon points="2870.50,382.50 2873.40,389.71 2881.15,390.24 2875.19,395.22 2877.08,402.76 2870.50,398.63 2863.92,402.76 2865.81,395.22 2859.85,390.24 2867.60,389.71" fill="#333"/><polygon points="2894.50,382.50 2897.40,389.71 2905.15,390.24 2899.19,395.22 2901.08,402.76 2894.50,398.63 2887.92,402.76 2889.81,395.22 2883.85,390.24 2891.60,389.71" fill="#333"/><polygon points="2918.50,382.50 2921.40,389.71 2929.15,390.24 2923.19,395.22 2925.08,402.76 2918.50,398.63 2911.92,402.76 2913.81,395.22 2907.85,390.24 2915.60,389.71" fill="#333"/><polygon points="2942.50,382.50 2945.40,389.71 2953.15,390.24 2947.19,395.22 2949.08,402.76 2942.50,398.63 2935.92,402.76 2937.81,395.22 2931.85,390.24 2939.60,389.71" fill="#333"/><polygon points="2966.50,383.67 2969.09,390.13 2976.04,390.60 2970.70,395.06 2972.40,401.81 2966.50,398.11 2960.60,401.81 2962.30,395.06 2956.96,390.60 2963.91,390.13" fill="none" stroke="#333" stroke-width="1.3" stroke-linejoin="miter"/><polygon points="2870.50,445.50 2873.40,452.71 2881.15,453.24 2875.19,458.22 2877.08,465.76 2870.50,461.63 2863.92,465.76 2865.81,458.22 2859.85,453.24 2867.60,452.71" fill="#333"/><polygon points="2894.50,445.50 2897.40,452.71 2905.15,453.24 2899.19,458.22 2901.08,465.76 2894.50,461.63 2887.92,465.76 2889.81,458.22 2883.85,453.24 2891.60,452.71" fill="#333"/><polygon points="2918.50,445.50 2921.40,452.71 2929.15,453.24 2923.19,458.22 2925.08,465.76 2918.50,461.63 2911.92,465.76 2913.81,458.22 2907.85,453.24 2915.60,452.71" fill="#333"/><polygon points="2942.50,445.50 2945.40,452.71 2953.15,453.24 2947.19,458.22 2949.08,465.76 2942.50,461.63 2935.92,465.76 2937.81,458.22 2931.85,453.24 2939.60,452.71" fill="#333"/><polygon points="2966.50,446.67 2969.09,453.13 2976.04,453.60 2970.70,458.06 2972.40,464.81 2966.50,461.11 2960.60,464.81 2962.30,458.06 2956.96,453.60 2963.91,453.13" fill="none" stroke="#333" stroke-width="1.3" stroke-linejoin="miter"/></svg>
<div class="a" style="left:3093px;top:63.5px;width:19.5px;height:84px;border-radius:10px;background:#8e8e8e"></div>
<div class="a" style="left:3095px;top:13px;width:0;height:0;border-left:8px solid transparent;border-right:8px solid transparent;border-bottom:11px solid #9a9a9a"></div>
</div>
<div class="t c" style="left:213px;top:1509px;font-size:23px;color:#2a2a2a;font-weight:700">순번</div>
<div class="t c" style="left:459px;top:1509px;font-size:23px;color:#2a2a2a;font-weight:700">수목명</div>
<div class="t c" style="left:819px;top:1509px;font-size:23px;color:#2a2a2a;font-weight:700">수목규격</div>
<div class="t c" style="left:1154px;top:1509px;font-size:23px;color:#2a2a2a;font-weight:700">수목단위</div>
<div class="t c" style="left:1432.5px;top:1509px;font-size:23px;color:#2a2a2a;font-weight:700">참고거래량</div>
<div class="t c" style="left:1758px;top:1509px;font-size:23px;color:#2a2a2a;font-weight:700">예상단가</div>
<div class="t c" style="left:2128.5px;top:1509px;font-size:23px;color:#2a2a2a;font-weight:700">기준단가코드</div>
<div class="t c" style="left:2484px;top:1509px;font-size:23px;color:#2a2a2a;font-weight:700">수집지역</div>
<div class="t c" style="left:2763px;top:1509px;font-size:23px;color:#2a2a2a;font-weight:700">수집년월</div>
<div class="t c" style="left:3054px;top:1509px;font-size:23px;color:#2a2a2a;font-weight:700">신뢰도지표</div>
<div class="a" style="left:866px;top:1497.5px;width:0;height:0;border-left:6.3px solid transparent;border-right:6.3px solid transparent;border-bottom:6.5px solid #c4c4c4"></div>
<div class="a" style="left:866px;top:1507.5px;width:0;height:0;border-left:6.3px solid transparent;border-right:6.3px solid transparent;border-top:6.5px solid #444"></div>
<div class="a" style="left:137px;top:2104.5px;width:3119px;height:2px;background:#e3e3e3"></div>
<div class="a" style="left:1638.5px;top:2047px;width:83px;height:35px;border-top:2px solid #dcdcdc;border-bottom:2px solid #dcdcdc"></div>
<div class="t" style="left:1642px;top:2063px;font-size:24px;color:#222">1</div>
<div class="t" style="left:1727px;top:2063px;font-size:24px;color:#333">/ 2</div>
<div class="a" style="left:1619px;top:2055px;width:2px;height:19px;background:#d5d5d5"></div>
<div class="a" style="left:1772.5px;top:2055px;width:2px;height:19px;background:#d5d5d5"></div>
<div class="a" style="left:1523px;top:2060px;width:3px;height:9px;background:#bbb"></div>
<div class="a" style="left:1527px;top:2060px;width:0;height:0;border-top:4.5px solid transparent;border-bottom:4.5px solid transparent;border-right:11px solid #bbb"></div>
<div class="a" style="left:1572px;top:2059px;width:0;height:0;border-top:6px solid transparent;border-bottom:6px solid transparent;border-right:14px solid #bbb"></div>
<div class="a" style="left:1807.5px;top:2059px;width:0;height:0;border-top:6px solid transparent;border-bottom:6px solid transparent;border-left:14px solid #333"></div>
<div class="a" style="left:1856.5px;top:2060px;width:0;height:0;border-top:4.5px solid transparent;border-bottom:4.5px solid transparent;border-left:12px solid #333"></div>
<div class="a" style="left:1869.5px;top:2060px;width:3px;height:9px;background:#333"></div>
<div class="t r" style="left:3227px;top:2063px;font-size:24px;color:#333">View 1 - 100 of 143</div>
<div class="a" style="left:77px;top:2182px;width:26px;height:24px;background:linear-gradient(to right,#f3f5f5,#fff)"></div>
<div class="a" style="left:75.5px;top:2182px;width:2px;height:24px;background:#d6d6d6"></div>
<svg class="a" style="left:0;top:0" width="3380" height="2206"><polygon points="1546.00,635.80 1548.90,643.01 1556.65,643.54 1550.69,648.52 1552.58,656.06 1546.00,651.93 1539.42,656.06 1541.31,648.52 1535.35,643.54 1543.10,643.01" fill="#0b1a3c"/><polygon points="1570.10,637.33 1572.60,643.56 1579.30,644.01 1574.15,648.31 1575.78,654.82 1570.10,651.25 1564.42,654.82 1566.05,648.31 1560.90,644.01 1567.60,643.56" fill="none" stroke="#0b1a3c" stroke-width="1.7" stroke-linejoin="miter"/><polygon points="1594.20,637.33 1596.70,643.56 1603.40,644.01 1598.25,648.31 1599.88,654.82 1594.20,651.25 1588.52,654.82 1590.15,648.31 1585.00,644.01 1591.70,643.56" fill="none" stroke="#0b1a3c" stroke-width="1.7" stroke-linejoin="miter"/><polygon points="1618.30,637.33 1620.80,643.56 1627.50,644.01 1622.35,648.31 1623.98,654.82 1618.30,651.25 1612.62,654.82 1614.25,648.31 1609.10,644.01 1615.80,643.56" fill="none" stroke="#0b1a3c" stroke-width="1.7" stroke-linejoin="miter"/><polygon points="1642.40,637.33 1644.90,643.56 1651.60,644.01 1646.45,648.31 1648.08,654.82 1642.40,651.25 1636.72,654.82 1638.35,648.31 1633.20,644.01 1639.90,643.56" fill="none" stroke="#0b1a3c" stroke-width="1.7" stroke-linejoin="miter"/></svg>
</body></html>
